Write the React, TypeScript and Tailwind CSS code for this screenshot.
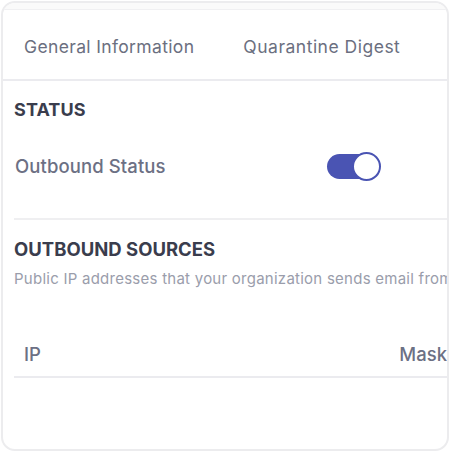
import React from 'react';

const App: React.FC = () => {
    return (
        <div className="w-[451px] h-[452px] bg-white p-[1px]" style={{ fontFamily: 'Inter, "Noto Sans", sans-serif' }}>
            <div className="w-[448px] h-[450px] border-2 border-[#ececee] rounded-[14px] overflow-hidden flex flex-col bg-white">
                <div className="h-[7px] bg-[#fafafa] border-b border-[#f0f0f2] shrink-0" />
                <div className="h-[71px] pt-[5px] flex items-center border-b-2 border-[#ebebef] shrink-0 whitespace-nowrap">
                    <span className="ml-[21px] text-[17.5px] tracking-[0.35px] text-[#6b6f80]">General Information</span>
                    <span className="ml-[49px] text-[17.5px] tracking-[0.5px] text-[#6b6f80]">Quarantine Digest</span>
                </div>
                <div className="pl-[11px]">
                    <h2 className="mt-[17px] text-[18px] leading-[24px] font-bold text-[#3a3d4d] tracking-[0.1px]">STATUS</h2>
                    <div className="mt-[31px] flex items-center">
                        <span className="ml-[1px] w-[312px] text-[18.5px] font-medium tracking-[0.1px] text-[#6c7084]">Outbound Status</span>
                        <div className="relative w-[53px] h-[25px] rounded-full bg-[#4a54b3]">
                            <div className="absolute right-[-1px] top-[-2px] w-[29px] h-[29px] rounded-full bg-white border-2 border-[#4a54b3]" />
                        </div>
                    </div>
                    <div className="mt-[37px] h-[2px] bg-[#efeff1]" />
                    <h2 className="mt-[17px] text-[18.5px] leading-[24px] font-bold text-[#3a3d4d] whitespace-nowrap">OUTBOUND SOURCES</h2>
                    <p className="mt-[7px] text-[15px] tracking-[0.25px] text-[#9a9dab] whitespace-nowrap overflow-hidden">Public IP addresses that your organization sends email from</p>
                    <div className="mt-[44px] flex items-center justify-between h-[44px] border-b-2 border-[#ebebef] whitespace-nowrap">
                        <span className="ml-[10px] text-[18.5px] font-medium text-[#6c7084]">IP</span>
                        <span className="text-[18.5px] font-medium text-[#6c7084]">Mask</span>
                    </div>
                </div>
            </div>
        </div>
    );
};

export default App;
